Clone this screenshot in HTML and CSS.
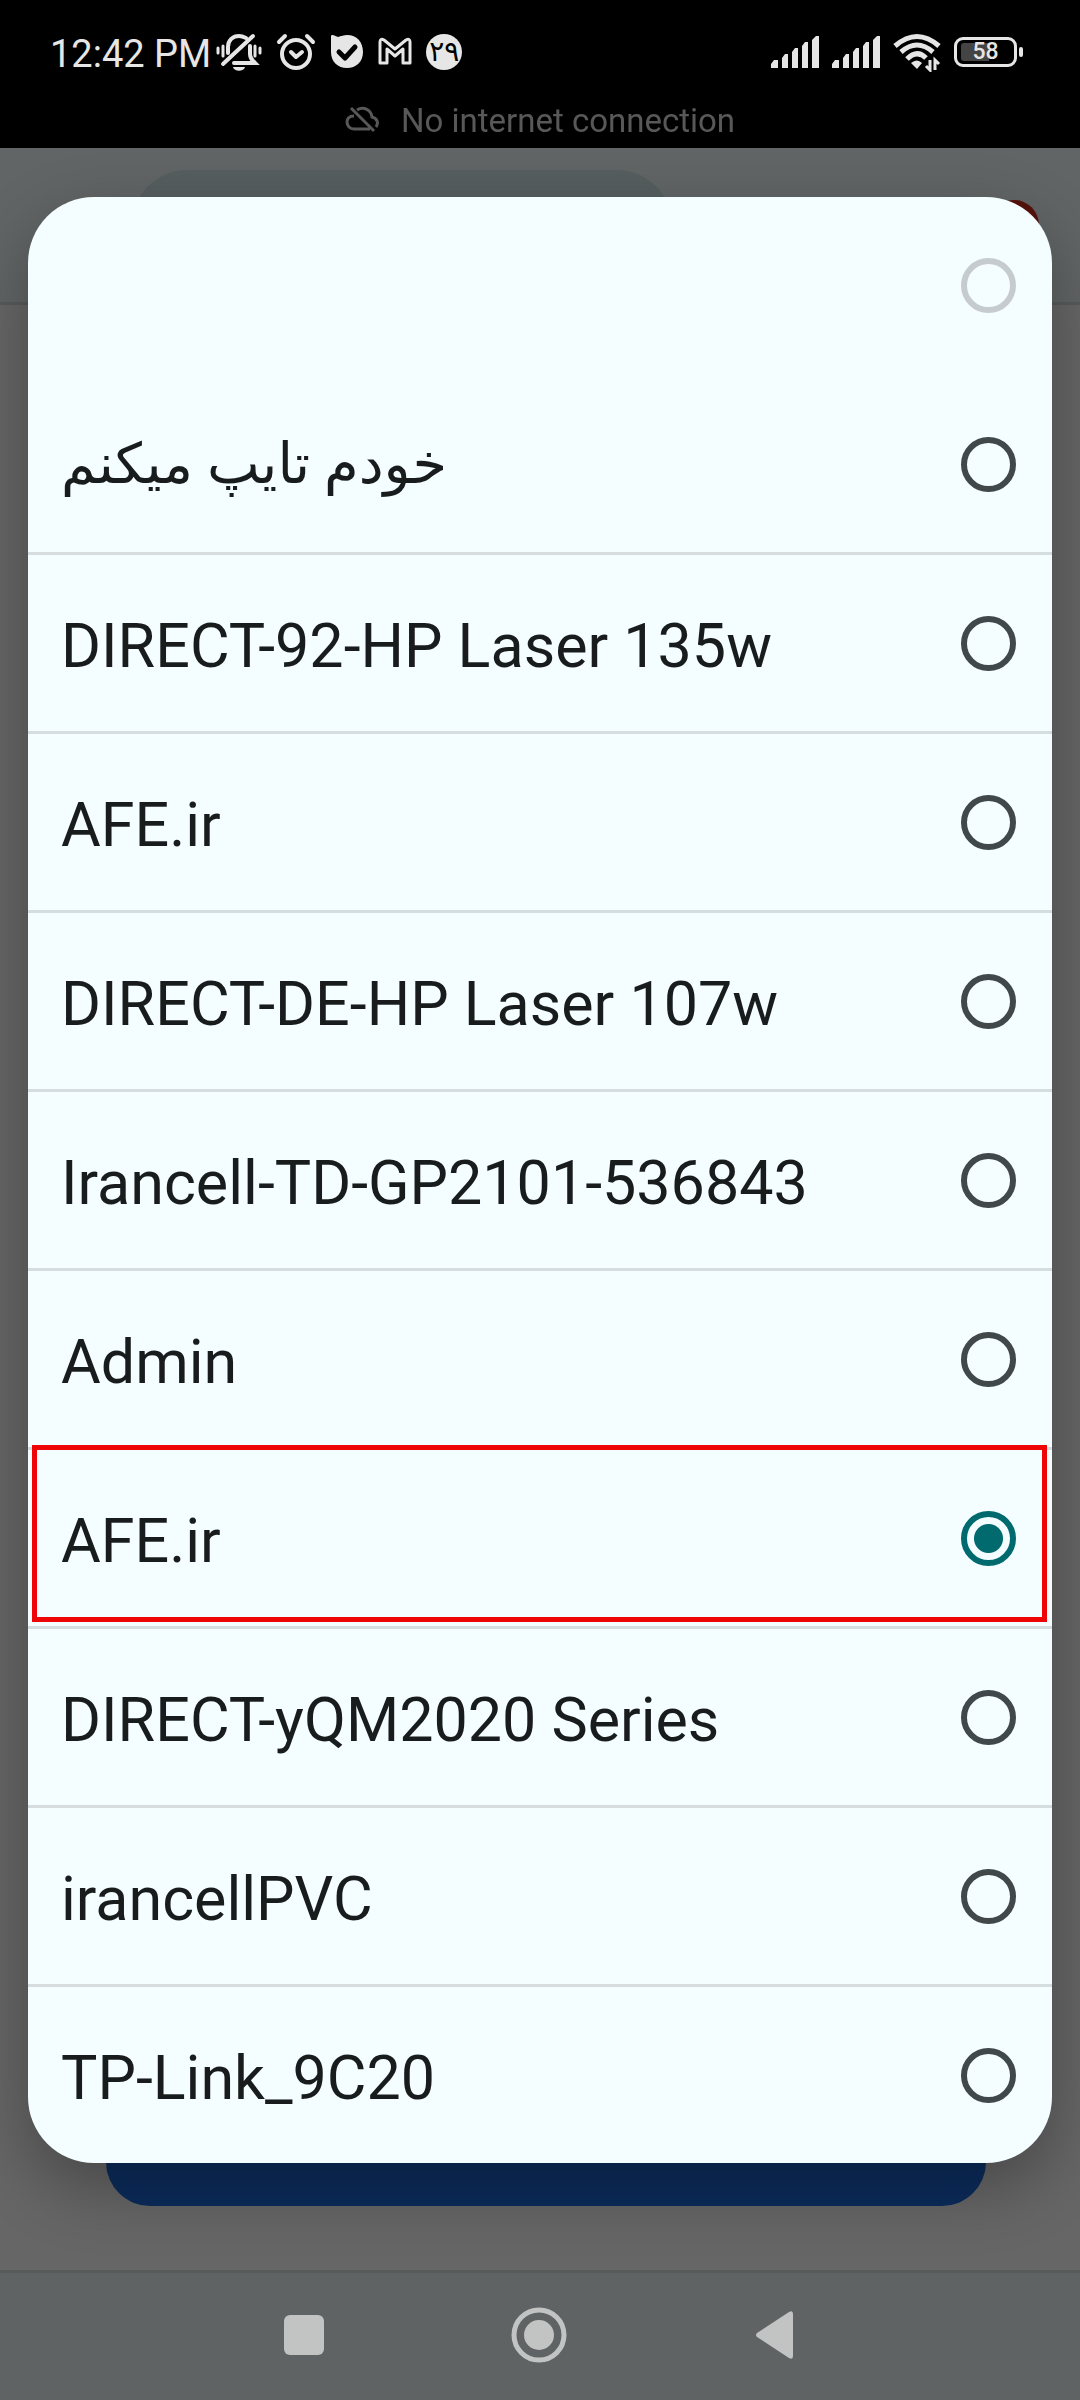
FILE: index.html
```html
<!DOCTYPE html>
<html lang="en">
<head>
  <meta charset="UTF-8" />
  <meta name="viewport" content="width=device-width, initial-scale=1.0" />
  <title>Wi-Fi networks</title>
  <link rel="stylesheet" href="styles.css">
</head>
<body>
  <!-- App behind the dialog -->
  <div class="app">
    <div class="app-header">
      <svg class="back-icon" viewBox="0 0 24 24"><path d="M20 11H7.83l5.59-5.59L12 4l-8 8 8 8 1.41-1.41L7.83 13H20v-2z"/></svg>
      <div class="search-pill"></div>
      <div class="record-dot"></div>
    </div>
    <div class="app-body">
      <div class="connect-bar"></div>
    </div>
    <div class="app-footer"></div>
  </div>
  <div class="scrim"></div>

  <div class="screen">
    <!-- Status bar -->
    <header class="status">
      <div class="status-row">
        <span class="clock">12:42 PM</span>
        <div class="status-left">
          <svg width="46" height="40" viewBox="0 0 46 40" fill="none" stroke="#e6e6e6" stroke-linecap="round">
            <path d="M12 21v-6c0-7 5-11 11-11 3 0 5 1 7 2M34 14v8c0 4 2 6 5 9H18" stroke-width="4"/>
            <path d="M7 32L37 4" stroke-width="4"/>
            <path d="M2 16v5M7 14v10M39 14v10M44 16v5" stroke-width="3"/>
            <path d="M17 35h12c-1 5-11 5-12 0z" fill="#e6e6e6" stroke="none"/>
          </svg>
          <svg width="40" height="40" viewBox="0 0 40 40" fill="none" stroke="#e6e6e6" stroke-linecap="round" stroke-linejoin="round">
            <circle cx="20" cy="22" r="14" stroke-width="4"/>
            <path d="M3 10l6-6M37 10l-6-6M15 20l5 5 6-5" stroke-width="4"/>
          </svg>
          <svg width="34" height="40" viewBox="0 0 34 40">
            <path d="M1 4c0-1 1-1 2-1l5 2c3-1 6-2 9-2 10 0 16 7 16 17s-7 16-16 16S1 30 1 20z" fill="#e6e6e6"/>
            <path d="M9 20l6 6 10-11" fill="none" stroke="#000" stroke-width="5" stroke-linecap="round" stroke-linejoin="round"/>
          </svg>
          <svg width="34" height="40" viewBox="0 0 34 40">
            <path d="M2 31V10q0-4 4-2l11 9 11-9q4-2 4 2v21h-7V17l-8 7-8-7v14z" fill="none" stroke="#e6e6e6" stroke-width="3" stroke-linejoin="round"/>
          </svg>
          <span class="day-badge">۲۹</span>
        </div>
        <div class="status-right">
          <svg width="48" height="40" viewBox="0 0 48 40" fill="#e6e6e6"><path d="M0 36v-4l3-4h4v8zM11 36V26l3-4h3v14zM21 36V20l3-4h3v20zM31 36V14l3-4h3v26zM41 36V8l4-4h3v32z"/></svg>
          <svg width="48" height="40" viewBox="0 0 48 40" fill="#e6e6e6"><path d="M0 36v-4l3-4h4v8zM11 36V26l3-4h3v14zM21 36V20l3-4h3v20zM31 36V14l3-4h3v26zM41 36V8l4-4h3v32z"/></svg>
          <svg width="48" height="40" viewBox="0 0 48 40" fill="none" stroke="#e6e6e6" stroke-width="5">
            <path d="M2 14Q24-5 46 14M8 20Q24 6 40 20M14 27Q24 17 33 26"/>
            <path d="M18 31q6-5 11 0l-5 6z" fill="#e6e6e6" stroke="none"/>
            <path d="M37 28v10l-4-4M42 38V28l4 4" stroke-width="3"/>
          </svg>
          <span class="battery"><span class="battery-level">58</span></span>
        </div>
      </div>
      <div class="notice">
        <svg width="34" height="34" viewBox="0 0 34 34" fill="none" stroke="#585858" stroke-width="3">
          <path d="M6 5l23 23M9 13c-5 0-7 3-7 6 0 4 3 7 7 7h16M12 7c7-4 14 0 15 7 5 1 7 6 4 10"/>
        </svg>
        <span>No internet connection</span>
      </div>
    </header>

    <!-- Network picker -->
    <form class="dialog">
      <label class="option disabled"><span></span><input type="radio" name="network" disabled /></label>
      <label class="option"><span lang="fa" dir="rtl">خودم تایپ میکنم</span><input type="radio" name="network" /></label>
      <label class="option"><span>DIRECT-92-HP Laser 135w</span><input type="radio" name="network" /></label>
      <label class="option"><span>AFE.ir</span><input type="radio" name="network" /></label>
      <label class="option"><span>DIRECT-DE-HP Laser 107w</span><input type="radio" name="network" /></label>
      <label class="option"><span>Irancell-TD-GP2101-536843</span><input type="radio" name="network" /></label>
      <label class="option"><span>Admin</span><input type="radio" name="network" /></label>
      <label class="option marked"><span>AFE.ir</span><input type="radio" name="network" checked /></label>
      <label class="option"><span>DIRECT-yQM2020 Series</span><input type="radio" name="network" /></label>
      <label class="option"><span>irancellPVC</span><input type="radio" name="network" /></label>
      <label class="option"><span>TP-Link_9C20</span><input type="radio" name="network" /></label>
    </form>

    <!-- System navigation -->
    <nav class="system-nav">
      <button type="button" aria-label="Recent apps"><svg width="56" height="56" viewBox="0 0 56 56"><rect x="8" y="8" width="40" height="40" rx="6"/></svg></button>
      <button type="button" aria-label="Home"><svg width="56" height="56" viewBox="0 0 56 56"><circle cx="28" cy="28" r="25" fill="none" stroke="#c2c4c4" stroke-width="5"/><circle cx="28" cy="28" r="15"/></svg></button>
      <button type="button" aria-label="Back"><svg width="56" height="56" viewBox="0 0 56 56"><path d="M11 26L43 5q4-2 4 2v42q0 4-4 2L11 30q-2-2 0-4z"/></svg></button>
    </nav>
  </div>
</body>
</html>
```

FILE: styles.css
```css
* {
  box-sizing: border-box;
}

body {
  margin: 0;
  font-family: Roboto, "Noto Sans", "DejaVu Sans", sans-serif;
  background: #000;
}

/* App behind the dialog */
.app {
  position: fixed;
  inset: 148px 0 0;
  display: flex;
  flex-direction: column;
  background: #fff;
}

.app-header {
  display: flex;
  align-items: center;
  gap: 33px;
  height: 157px;
  padding: 0 41px 0 33px;
  background: #f4fcfd;
  border-bottom: 3px solid #dbe4e6;
}

.back-icon {
  width: 66px;
  height: 66px;
}

.search-pill {
  width: 50vw;
  height: 110px;
  border-radius: 55px;
  background: #d7ebee;
}

.record-dot {
  width: 50px;
  height: 50px;
  margin-left: auto;
  border-radius: 50%;
  background: #d92b20;
}

.app-body {
  flex: 1;
  display: flex;
  align-items: flex-end;
  padding: 0 94px 64px 106px;
}

.connect-bar {
  flex: 1;
  height: 132px;
  border-radius: 44px;
  background: #1f6fe5;
}

.app-footer {
  height: 130px;
  background: #f0f8fa;
  border-top: 3px solid #dbe4e6;
}

.scrim {
  position: fixed;
  inset: 148px 0 0;
  background: rgba(0, 0, 0, 0.6);
}

.screen {
  position: relative;
  min-height: 100vh;
  display: flex;
  flex-direction: column;
}

/* Status bar */
.status {
  height: 148px;
  padding-top: 32px;
  color: #e6e6e6;
  background: #000;
}

.status-row {
  display: flex;
  align-items: center;
  height: 40px;
  padding: 0 63px 0 50px;
}

.clock {
  padding-top: 3px;
  font-size: 38px;
}

.status-left,
.status-right {
  display: flex;
  align-items: center;
}

.status-left {
  gap: 14px;
  margin-left: 5px;
}

.status-right {
  gap: 13px;
  margin-left: auto;
}

.day-badge {
  width: 36px;
  height: 36px;
  border-radius: 50%;
  background: #e6e6e6;
  color: #000;
  font-size: 28px;
  line-height: 36px;
  text-align: center;
}

.battery {
  position: relative;
  width: 63px;
  height: 30px;
  padding: 3px 4px;
  border: 3px solid #e6e6e6;
  border-radius: 9px;
}

.battery::after {
  content: "";
  position: absolute;
  top: 7px;
  right: -9px;
  width: 4px;
  height: 10px;
  border-radius: 2px;
  background: #e6e6e6;
}

.battery-level {
  display: block;
  border-radius: 3px;
  background: linear-gradient(to right, #444 58%, transparent 58%);
  font-size: 23px;
  font-weight: 500;
  line-height: 18px;
  text-align: center;
}

.notice {
  display: flex;
  justify-content: center;
  align-items: center;
  gap: 22px;
  height: 40px;
  margin-top: 28px;
  color: #585858;
  font-size: 33px;
}

/* Network picker */
.dialog {
  margin: 49px 28px 0;
  border-radius: 66px;
  overflow: hidden;
  background: #f4fdff;
  box-shadow: 0 24px 66px rgba(0, 0, 0, 0.3);
}

.option {
  position: relative;
  display: flex;
  justify-content: space-between;
  align-items: center;
  height: 179px;
  padding: 0 36px 0 33px;
  border-bottom: 3px solid #d5dddf;
  color: #191c1d;
  font-size: 61px;
}

.option span {
  padding-top: 6px;
}

.option span[dir="rtl"] {
  padding-top: 0;
  font-size: 56px;
}

.option.disabled {
  border-color: transparent;
}

.option:last-child {
  height: 176px;
  border-bottom: none;
}

.option input {
  appearance: none;
  width: 55px;
  height: 55px;
  margin: 0;
  border: 6px solid #40484a;
  border-radius: 50%;
}

.option input:checked {
  border-color: #006a6f;
  background: radial-gradient(circle, #006a6f 14px, transparent 15px);
}

.option input:disabled {
  border-color: #c6cccd;
}

.option.marked::after {
  content: "";
  position: absolute;
  inset: -5px 5px 4px 4px;
  border: 5px solid #ee0606;
}

/* System navigation */
.system-nav {
  display: flex;
  justify-content: center;
  align-items: center;
  gap: 179px;
  height: 130px;
  margin-top: auto;
  padding-right: 3px;
}

.system-nav button {
  padding: 0;
  border: none;
  background: none;
  line-height: 0;
}

.system-nav svg {
  fill: #c2c4c4;
}
```
